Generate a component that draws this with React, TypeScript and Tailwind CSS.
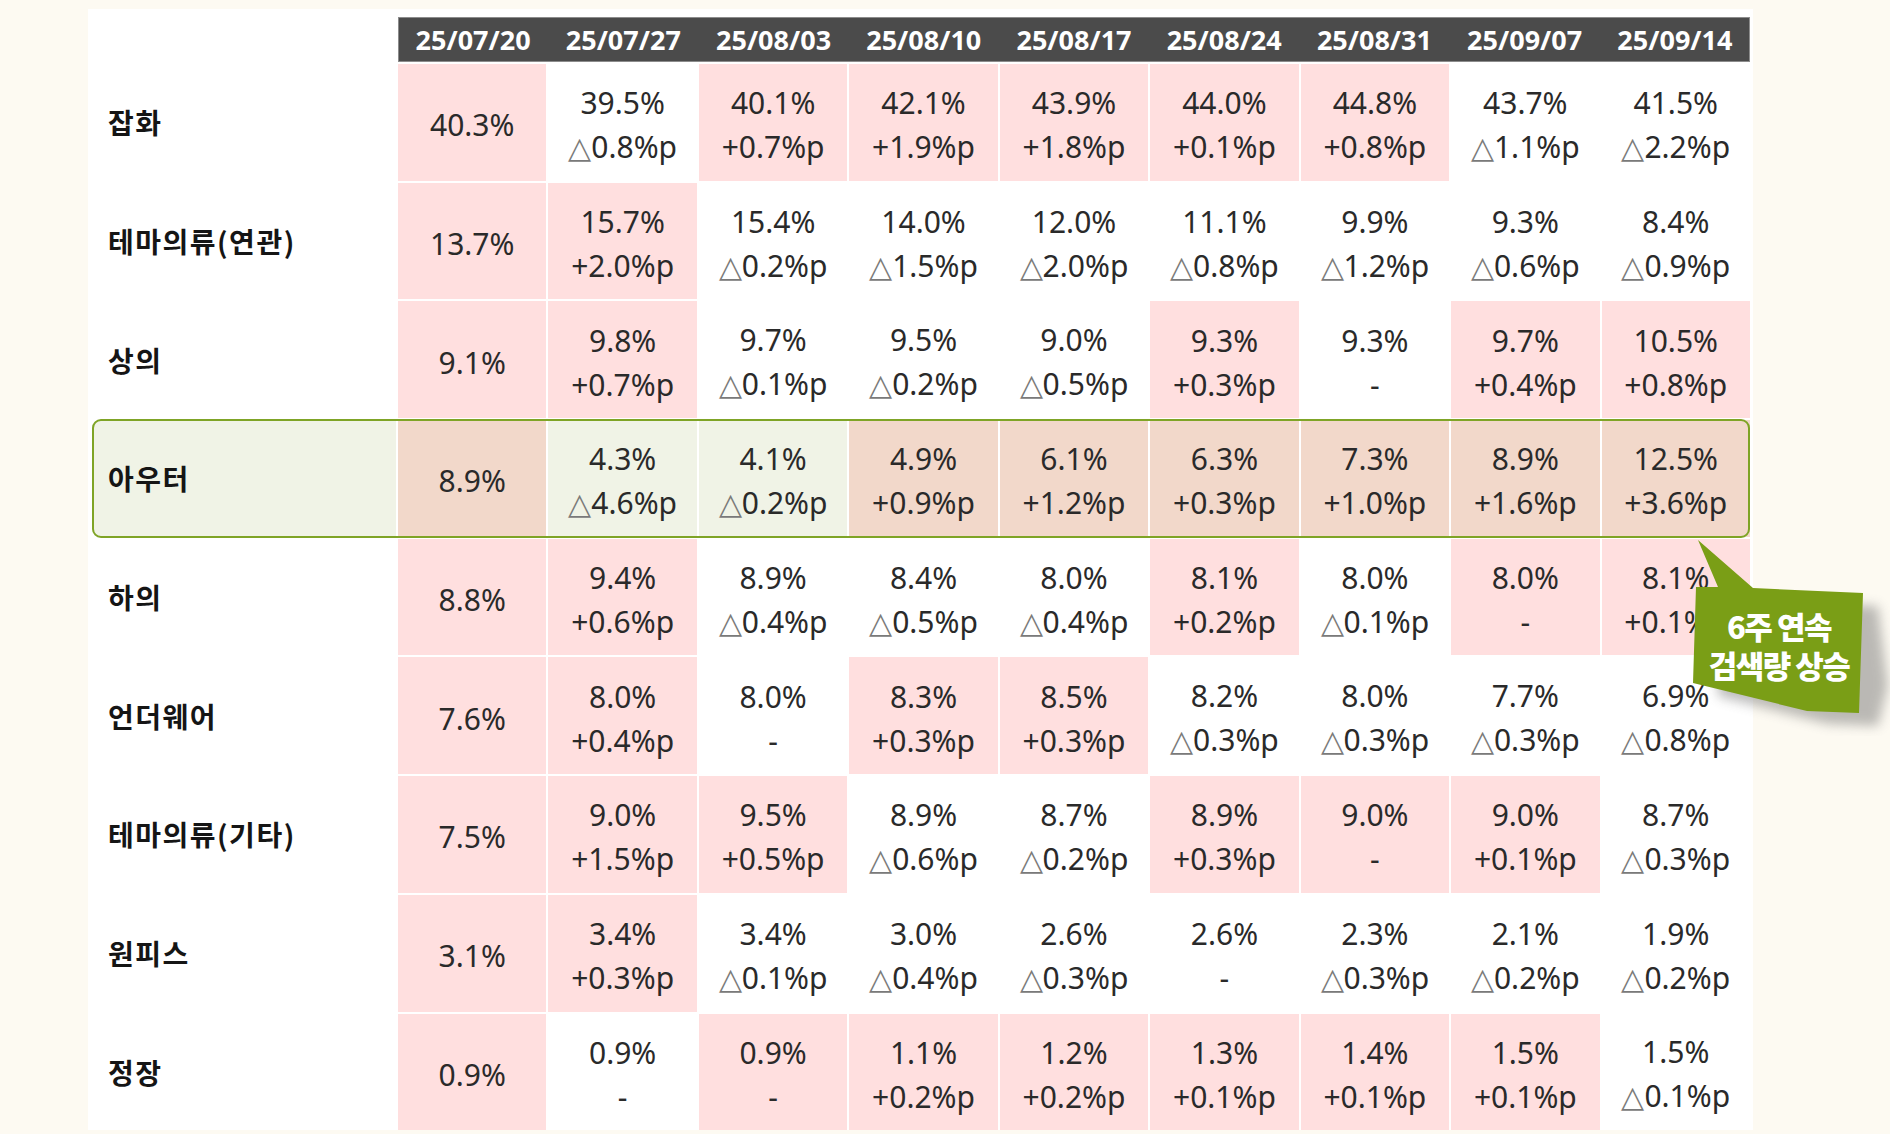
import React from "react";

type Cell = { v: string; d?: string; hl?: boolean };
type Row = { label: string; cells: Cell[]; highlight?: boolean };

const dates = [
  "25/07/20",
  "25/07/27",
  "25/08/03",
  "25/08/10",
  "25/08/17",
  "25/08/24",
  "25/08/31",
  "25/09/07",
  "25/09/14",
];

const c = (v: string, d: string | undefined, hl: boolean): Cell => ({ v, d, hl });

const rows: Row[] = [
  {
    label: "잡화",
    cells: [
      c("40.3%", undefined, true),
      c("39.5%", "△0.8%p", false),
      c("40.1%", "+0.7%p", true),
      c("42.1%", "+1.9%p", true),
      c("43.9%", "+1.8%p", true),
      c("44.0%", "+0.1%p", true),
      c("44.8%", "+0.8%p", true),
      c("43.7%", "△1.1%p", false),
      c("41.5%", "△2.2%p", false),
    ],
  },
  {
    label: "테마의류(연관)",
    cells: [
      c("13.7%", undefined, true),
      c("15.7%", "+2.0%p", true),
      c("15.4%", "△0.2%p", false),
      c("14.0%", "△1.5%p", false),
      c("12.0%", "△2.0%p", false),
      c("11.1%", "△0.8%p", false),
      c("9.9%", "△1.2%p", false),
      c("9.3%", "△0.6%p", false),
      c("8.4%", "△0.9%p", false),
    ],
  },
  {
    label: "상의",
    cells: [
      c("9.1%", undefined, true),
      c("9.8%", "+0.7%p", true),
      c("9.7%", "△0.1%p", false),
      c("9.5%", "△0.2%p", false),
      c("9.0%", "△0.5%p", false),
      c("9.3%", "+0.3%p", true),
      c("9.3%", "-", false),
      c("9.7%", "+0.4%p", true),
      c("10.5%", "+0.8%p", true),
    ],
  },
  {
    label: "아우터",
    highlight: true,
    cells: [
      c("8.9%", undefined, true),
      c("4.3%", "△4.6%p", false),
      c("4.1%", "△0.2%p", false),
      c("4.9%", "+0.9%p", true),
      c("6.1%", "+1.2%p", true),
      c("6.3%", "+0.3%p", true),
      c("7.3%", "+1.0%p", true),
      c("8.9%", "+1.6%p", true),
      c("12.5%", "+3.6%p", true),
    ],
  },
  {
    label: "하의",
    cells: [
      c("8.8%", undefined, true),
      c("9.4%", "+0.6%p", true),
      c("8.9%", "△0.4%p", false),
      c("8.4%", "△0.5%p", false),
      c("8.0%", "△0.4%p", false),
      c("8.1%", "+0.2%p", true),
      c("8.0%", "△0.1%p", false),
      c("8.0%", "-", true),
      c("8.1%", "+0.1%p", true),
    ],
  },
  {
    label: "언더웨어",
    cells: [
      c("7.6%", undefined, true),
      c("8.0%", "+0.4%p", true),
      c("8.0%", "-", false),
      c("8.3%", "+0.3%p", true),
      c("8.5%", "+0.3%p", true),
      c("8.2%", "△0.3%p", false),
      c("8.0%", "△0.3%p", false),
      c("7.7%", "△0.3%p", false),
      c("6.9%", "△0.8%p", false),
    ],
  },
  {
    label: "테마의류(기타)",
    cells: [
      c("7.5%", undefined, true),
      c("9.0%", "+1.5%p", true),
      c("9.5%", "+0.5%p", true),
      c("8.9%", "△0.6%p", false),
      c("8.7%", "△0.2%p", false),
      c("8.9%", "+0.3%p", true),
      c("9.0%", "-", true),
      c("9.0%", "+0.1%p", true),
      c("8.7%", "△0.3%p", false),
    ],
  },
  {
    label: "원피스",
    cells: [
      c("3.1%", undefined, true),
      c("3.4%", "+0.3%p", true),
      c("3.4%", "△0.1%p", false),
      c("3.0%", "△0.4%p", false),
      c("2.6%", "△0.3%p", false),
      c("2.6%", "-", false),
      c("2.3%", "△0.3%p", false),
      c("2.1%", "△0.2%p", false),
      c("1.9%", "△0.2%p", false),
    ],
  },
  {
    label: "정장",
    cells: [
      c("0.9%", undefined, true),
      c("0.9%", "-", false),
      c("0.9%", "-", true),
      c("1.1%", "+0.2%p", true),
      c("1.2%", "+0.2%p", true),
      c("1.3%", "+0.1%p", true),
      c("1.4%", "+0.1%p", true),
      c("1.5%", "+0.1%p", true),
      c("1.5%", "△0.1%p", false),
    ],
  },
];

const numFont = { fontFamily: '"Noto Sans", "DejaVu Sans", sans-serif' };
const korFont = { fontFamily: '"Noto Sans CJK KR", "Noto Sans", sans-serif' };

function Delta({ d }: { d: string }) {
  if (d.startsWith("△")) {
    return (
      <span>
        <span className="text-[#7a7a7a] font-light" style={{ fontFamily: '"DejaVu Sans", sans-serif' }}>
          △
        </span>
        {d.slice(1)}
      </span>
    );
  }
  return <span>{d}</span>;
}

function DataCell({ cell, highlight }: { cell: Cell; highlight?: boolean }) {
  const bg = highlight
    ? cell.hl
      ? "bg-[#f2d8ca]"
      : "bg-[#f0f3e6]"
    : cell.hl
    ? "bg-[#ffdfdf]"
    : "bg-white";
  return (
    <div
      className={`${bg} flex flex-col items-center justify-center pt-[6px] text-[30px] leading-[44px] text-[#2a2a2a]`}
      style={numFont}
    >
      <span>{cell.v}</span>
      {cell.d !== undefined && <Delta d={cell.d} />}
    </div>
  );
}

export default function App() {
  return (
    <div className="relative w-[1890px] h-[1134px] bg-[#fdfaf2] overflow-hidden">
      <div className="ml-[88px] mt-[9px] w-[1665px] h-[1121px] bg-white pt-[8px] pr-[3px]">
        <div className="grid grid-cols-[308px_repeat(9,minmax(0,1fr))] gap-x-[2px] h-[45px]">
          <div />
          <div className="col-span-9 bg-[#4b4b4b] border border-[#8c8c8c] grid grid-cols-9 gap-x-[2px] items-center">
            {dates.map((d) => (
              <div
                key={d}
                className="text-center text-white font-bold text-[27px] leading-none"
                style={numFont}
              >
                {d}
              </div>
            ))}
          </div>
        </div>
        {rows.map((row) => (
          <div key={row.label} className="relative mt-[2px] h-[116.7px]">
            <div className="grid grid-cols-[308px_repeat(9,minmax(0,1fr))] gap-x-[2px] h-full">
              <div
                className={`flex items-center text-[28px] tracking-[1.5px] font-bold text-[#151515] ${
                  row.highlight ? "ml-[4px] pl-[16px] bg-[#f0f3e6] rounded-l-[8px]" : "pl-[20px]"
                }`}
                style={korFont}
              >
                {row.label}
              </div>
              {row.cells.map((cell, i) => (
                <DataCell key={i} cell={cell} highlight={row.highlight} />
              ))}
            </div>
            {row.highlight && (
              <div className="absolute left-[4px] right-0 -top-[1px] -bottom-[1px] border-2 border-[#7fa426] rounded-[9px] pointer-events-none" />
            )}
          </div>
        ))}
      </div>

      {/* callout */}
      <div className="absolute left-[1688px] top-[536px] w-[202px] h-[200px]">
        <svg width="202" height="200" viewBox="0 0 202 200" className="absolute left-0 top-0">
          <defs>
            <filter id="blur" x="-30%" y="-30%" width="160%" height="160%">
              <feGaussianBlur stdDeviation="6" />
            </filter>
          </defs>
          <polygon
            points="30,63 190,70 200,150 190,190 140,188 30,160"
            fill="#6b6b6b"
            opacity="0.45"
            filter="url(#blur)"
          />
          <polygon
            points="10,4 65,52 175,57 171,177 119,175 5,147 8,51 30,51"
            fill="#7a9e16"
          />
        </svg>
        <div
          className="absolute left-[4px] top-[70px] w-[174px] text-center text-white font-black text-[31px] leading-[39px] tracking-[-1.5px]"
          style={korFont}
        >
          <div>6주 연속</div>
          <div>검색량 상승</div>
        </div>
      </div>
    </div>
  );
}
